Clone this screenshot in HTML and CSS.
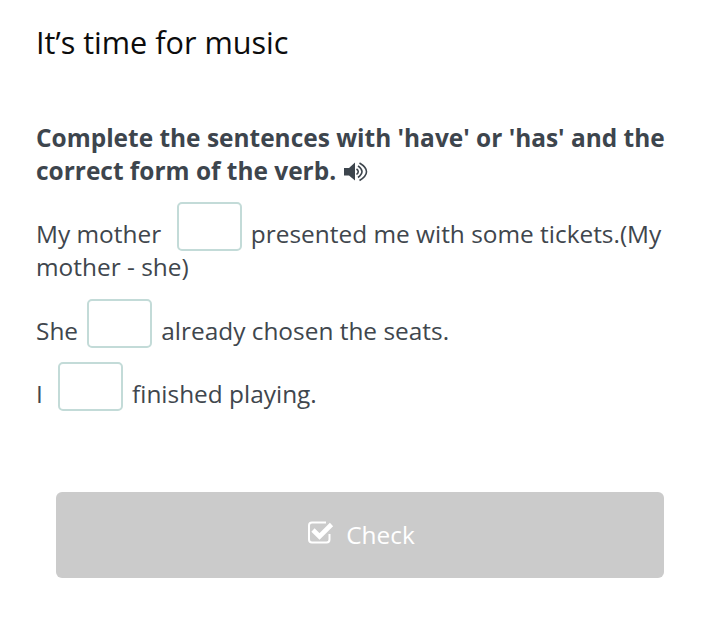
FILE: index.html
```html
<!DOCTYPE html>
<html lang="en">
<head>
<meta charset="utf-8">
<title>It’s time for music</title>
<link rel="stylesheet" href="styles.css">
</head>
<body>
<main>
<h1>It’s time for music</h1>
<h2>Complete the sentences with 'have' or 'has' and the correct form of the verb. <svg class="speaker" viewBox="0 0 24 20" aria-label="Listen"><path d="M0 6h5L11 .5v18L5 13.500H0z" fill="currentColor"/><path d="M12.500 7q3.500 2.500 0 5.500M14 3.800q8 5.700 0 11.700M15.500 1q14 8.500 0 17.500" fill="none" stroke="currentColor" stroke-width="1.600"/></svg></h2>
<p class="long">My mother <input class="wide first" aria-label="Answer 1"> presented me with some tickets.(My mother - she)</p>
<p>She <input aria-label="Answer 2"> already chosen the seats.</p>
<p>I <input class="wide" aria-label="Answer 3"> finished playing.</p>
<button type="button"><svg class="check" viewBox="0 0 27 23"><path d="M19 1.500H5Q2 1.500 2 4.500v14q0 3 3 3h14.500q3 0 3-3V13" fill="none" stroke="currentColor" stroke-width="2"/><path d="M6 9l6.500 6.500L24.500 3.500" fill="none" stroke="currentColor" stroke-width="4.600"/></svg><span>Check</span></button>
</main>
</body>
</html>
```
FILE: styles.css
```css
* { box-sizing: border-box; }
body { margin: 0; background: #fff; color: #40464d; font: 24.42px/33px "Open Sans", sans-serif; }
main { padding: 21px 36px 0; }
h1 { margin: 0; color: #0c0c0c; font-size: 30.6px; line-height: 42px; font-weight: 400; }
h2 { margin: 58px -10px 0 0; color: #3d454d; font-size: 24.45px; line-height: 33px; font-weight: 700; }
p { margin: 15px 0 14px; }
.long { line-height: 31px; }
p + p { margin-top: 17px; }
p + p + p { margin-top: 14px; }
input { width: 65px; height: 49px; margin: 0 2.5px 0 3px; padding: 0; border: 2px solid #c3dbd8; border-radius: 5px; background: #fff; vertical-align: 12px; }
.wide { margin-left: 9px; }
.first { margin: 0 2px 0 10px; }
button { display: flex; align-items: center; justify-content: center; width: 608px; height: 86px; margin: 81px 20px 0; padding: 0 0 2px 2px; border: 0; border-radius: 6px; background: #cbcbcb; color: #fff; font: inherit; }
.speaker { width: 24px; height: 20px; margin-left: 1.5px; vertical-align: -2px; }
.check { width: 27px; height: 23px; margin: 0 12px 4px 0; }
```
